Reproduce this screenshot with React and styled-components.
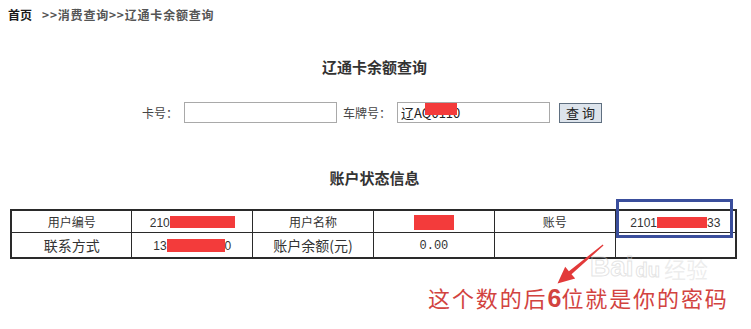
import React from "react";
import styled, { createGlobalStyle } from "styled-components";

const GlobalStyle = createGlobalStyle`
  html, body {
    margin: 0;
    padding: 0;
    background: #fff;
  }
  body {
    font-family: "Noto Sans CJK SC", "Liberation Sans", sans-serif;
    color: #333;
  }
`;

const App = () => {
  return (
    <Page>
      <GlobalStyle />
      <Crumbs>
        <Home>首页</Home>
        <Path>&gt;&gt;消费查询&gt;&gt;辽通卡余额查询</Path>
      </Crumbs>

      <Title top={34}>辽通卡余额查询</Title>

      <Form>
        <Label space={6}>卡号：</Label>
        <Input gap={6} />
        <Label space={6}>车牌号：</Label>
        <PlateWrap>
          <Input defaultValue="辽AQ0110" />
          <Redact style={{ left: 28, top: 1, width: 32, height: 12 }} />
        </PlateWrap>
        <Button>查 询</Button>
      </Form>

      <Title top={45}>账户状态信息</Title>

      <TableWrap>
        <Table>
          <tbody>
            <tr>
              <Cell>用户编号</Cell>
              <Cell>
                <Num>210</Num>
                <Block w={65} />
              </Cell>
              <Cell>用户名称</Cell>
              <Cell>
                <Block w={40} h={15} />
              </Cell>
              <Cell>账号</Cell>
              <Cell>
                <Num>2101</Num>
                <Block w={50} h={11} />
                <Num>33</Num>
              </Cell>
            </tr>
            <tr>
              <Cell big>联系方式</Cell>
              <Cell>
                <Num>13</Num>
                <Block w={58} h={13} />
                <Num>0</Num>
              </Cell>
              <Cell big>账户余额(元)</Cell>
              <Cell>
                <Mono>0.00</Mono>
              </Cell>
              <Cell />
              <Cell />
            </tr>
          </tbody>
        </Table>
      </TableWrap>

      <Note>
        这个数的后<Six>6</Six>位就是你的密码
      </Note>

      <Highlight />
      <Watermark>
        Bai<Paw>du</Paw>
        <Jy>经验</Jy>
      </Watermark>
      <Arrow viewBox="540 235 80 60" width="80" height="60">
        <polygon
          points="602.7,244.6 603.5,245.6 571.5,274.2 575.2,278.5 557.5,283.5 565.2,266.8 568.9,271.2"
          fill="#e23a3a"
        />
      </Arrow>
    </Page>
  );
};

export default App;

const Page = styled.div`
  position: relative;
  width: 751px;
  height: 329px;
  overflow: hidden;
  background: #fff;
`;

const Crumbs = styled.div`
  display: flex;
  align-items: center;
  padding: 7px 0 0 8px;
  height: 16px;
  font-size: 12px;
  line-height: 16px;
  font-weight: 700;
`;

const Home = styled.span`
  color: #1a1a1a;
`;

const Path = styled.span`
  color: #555;
  margin-left: 10px;
  letter-spacing: 0.8px;
`;

const Title = styled.div`
  margin-top: ${({ top }) => top}px;
  text-align: center;
  font-size: 15px;
  line-height: 20px;
  font-weight: 700;
  color: #333;
  padding-right: 2px;
`;

const Form = styled.div`
  margin-top: 25px;
  display: flex;
  align-items: center;
  height: 21px;
  padding-left: 142px;
`;

const Label = styled.span`
  font-size: 12px;
  color: #444;
  margin-right: ${({ space }) => space}px;
`;

const Input = styled.input`
  box-sizing: border-box;
  width: 153px;
  height: 21px;
  border: 1px solid #a9a9a9;
  padding: 0 3px;
  font-family: "Noto Sans CJK SC", "Liberation Sans", sans-serif;
  font-size: 13px;
  color: #222;
  outline: none;
  margin-right: ${({ gap }) => gap || 0}px;
`;

const PlateWrap = styled.div`
  position: relative;
  margin-right: 9px;
  display: flex;
`;

const Redact = styled.span`
  position: absolute;
  background: #f33b3b;
`;

const Button = styled.button`
  box-sizing: border-box;
  width: 43px;
  height: 20px;
  padding: 0;
  border: 1px solid #5f6f80;
  background: #dde4ec;
  font-family: "Noto Sans CJK SC", "Liberation Sans", sans-serif;
  font-size: 13px;
  line-height: 18px;
  color: #222;
`;

const TableWrap = styled.div`
  margin-top: 21px;
  padding-left: 10px;
`;

const Table = styled.table`
  width: 727px;
  table-layout: fixed;
  border-collapse: collapse;
  border: 2px solid #2a2a2a;
`;

const Cell = styled.td`
  border: 1px solid #2a2a2a;
  height: ${({ big }) => (big ? 24 : 21)}px;
  padding: 0;
  text-align: center;
  font-size: ${({ big }) => (big ? 14 : 12)}px;
  line-height: 16px;
  color: #333;
  white-space: nowrap;
  tr:last-child & {
    height: 24px;
  }
`;

const Num = styled.span`
  font-family: "Liberation Sans", sans-serif;
  font-size: 12px;
  color: #333;
  vertical-align: middle;
`;

const Mono = styled.span`
  font-family: "Liberation Mono", monospace;
  font-size: 12px;
  color: #333;
`;

const Block = styled.span`
  display: inline-block;
  vertical-align: middle;
  width: ${({ w }) => w}px;
  height: ${({ h }) => h || 12}px;
  background: #f33b3b;
`;

const Note = styled.div`
  margin-top: 25px;
  padding-left: 428px;
  font-size: 22px;
  line-height: 26px;
  letter-spacing: 1.9px;
  color: #d2433f;
  white-space: nowrap;
`;

const Six = styled.span`
  font-family: "Liberation Sans", sans-serif;
  font-weight: 700;
  font-size: 25px;
  letter-spacing: 0;
`;

const Highlight = styled.div`
  position: absolute;
  left: 616px;
  top: 199px;
  width: 117px;
  height: 39px;
  box-sizing: border-box;
  border: 3px solid #3a4e9c;
`;

const Watermark = styled.div`
  position: absolute;
  left: 590px;
  top: 254px;
  display: flex;
  align-items: flex-end;
  font-family: "Liberation Sans", sans-serif;
  font-size: 28px;
  font-weight: 700;
  line-height: 26px;
  color: transparent;
  -webkit-text-stroke: 1px rgba(200, 200, 200, 0.5);
  white-space: nowrap;
`;

const Paw = styled.span`
  font-size: 20px;
  line-height: 20px;
  margin: 0 4px 0 2px;
`;

const Jy = styled.span`
  font-family: "Noto Sans CJK SC", sans-serif;
  font-size: 22px;
  font-weight: 400;
  line-height: 24px;
  -webkit-text-stroke: 0;
  color: rgba(215, 215, 215, 0.45);
`;

const Arrow = styled.svg`
  position: absolute;
  left: 540px;
  top: 235px;
`;
